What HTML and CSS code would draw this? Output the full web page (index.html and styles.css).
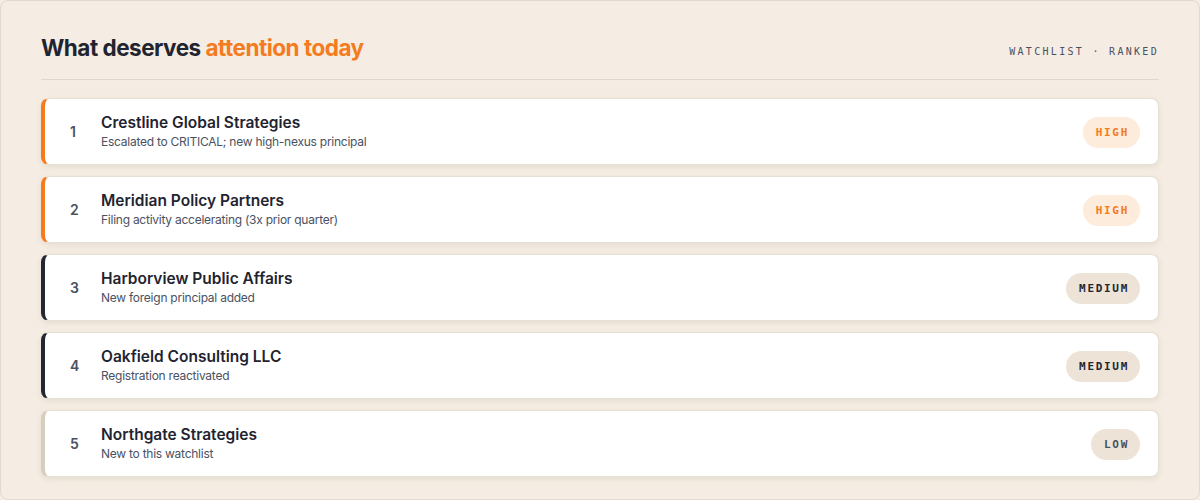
FILE: index.html
```html
<!DOCTYPE html>
<html lang="en">
<head>
<meta charset="utf-8">
<title>Watchlist</title>
<link rel="stylesheet" href="styles.css">
</head>
<body>
<section class="panel">
  <header class="head">
    <h1 class="title">What deserves <span class="accent">attention today</span></h1>
    <div class="meta">WATCHLIST · RANKED</div>
  </header>
  <ol class="list">
    <li class="item sev-high">
      <span class="rank">1</span>
      <div class="info">
        <div class="name">Crestline Global Strategies</div>
        <div class="desc">Escalated to CRITICAL; new high-nexus principal</div>
      </div>
      <span class="badge badge-high">HIGH</span>
    </li>
    <li class="item sev-high">
      <span class="rank">2</span>
      <div class="info">
        <div class="name">Meridian Policy Partners</div>
        <div class="desc">Filing activity accelerating (3x prior quarter)</div>
      </div>
      <span class="badge badge-high">HIGH</span>
    </li>
    <li class="item sev-medium">
      <span class="rank">3</span>
      <div class="info">
        <div class="name">Harborview Public Affairs</div>
        <div class="desc">New foreign principal added</div>
      </div>
      <span class="badge badge-medium">MEDIUM</span>
    </li>
    <li class="item sev-medium">
      <span class="rank">4</span>
      <div class="info">
        <div class="name">Oakfield Consulting LLC</div>
        <div class="desc">Registration reactivated</div>
      </div>
      <span class="badge badge-medium">MEDIUM</span>
    </li>
    <li class="item sev-low">
      <span class="rank">5</span>
      <div class="info">
        <div class="name">Northgate Strategies</div>
        <div class="desc">New to this watchlist</div>
      </div>
      <span class="badge badge-low">LOW</span>
    </li>
  </ol>
</section>
</body>
</html>
```

FILE: styles.css
```css
* { box-sizing: border-box; }
html, body { margin: 0; padding: 0; background: #f5ede3; }
body { font-family: Inter, "Liberation Sans", sans-serif; color: #1f2430; }

.panel {
  width: 1200px;
  height: 500px;
  background: #f5ede3;
  border: 1px solid #e2d9cc;
  border-radius: 8px;
  padding: 32px 40px 22px 40px;
}

.head {
  display: flex;
  align-items: center;
  justify-content: space-between;
  padding-bottom: 16px;
  border-bottom: 1px solid #e0d7ca;
}
.title {
  margin: 0;
  font-size: 22.5px;
  line-height: 30px;
  font-weight: 700;
  letter-spacing: -0.5px;
  color: #1f2430;
}
.accent { color: #f47b20; }
.meta {
  font-family: "DejaVu Sans Mono", "Liberation Mono", monospace;
  font-size: 10px;
  letter-spacing: 2.3px;
  color: #4a5162;
  padding-top: 6px;
}

.list {
  list-style: none;
  margin: 18px 0 0 0;
  padding: 0;
  display: flex;
  flex-direction: column;
  gap: 11px;
}
.item {
  display: flex;
  align-items: center;
  height: 67px;
  background: #ffffff;
  border: 1px solid #e6dfd4;
  border-left: 4px solid #f47b20;
  border-radius: 8px;
  padding: 0 18px 0 24px;
  box-shadow: 0 2px 6px rgba(120, 100, 70, 0.12);
}
.sev-high { border-left-color: #f47b20; }
.sev-medium { border-left-color: #232733; }
.sev-low { border-left-color: #d6cebf; }

.rank {
  width: 32px;
  font-size: 14px;
  font-weight: 600;
  color: #4a5162;
  padding-left: 1px;
}
.info { flex: 1; display: flex; flex-direction: column; gap: 1px; margin-top: -1px; }
.name {
  font-size: 15.5px;
  font-weight: 600;
  letter-spacing: 0;
  color: #1f2430;
  line-height: 19px;
}
.desc {
  font-size: 12px;
  letter-spacing: -0.25px;
  color: #4a5162;
  line-height: 17px;
}

.badge {
  font-family: "DejaVu Sans Mono", "Liberation Mono", monospace;
  font-size: 11px;
  font-weight: 700;
  letter-spacing: 1.7px;
  height: 31px;
  line-height: 31px;
  padding: 0 11px 0 13px;
  border-radius: 16px;
  margin-top: 1px;
}
.badge-high { background: #fdebdc; color: #f47b20; }
.badge-medium { background: #ede4d7; color: #232733; }
.badge-low { background: #ede4d7; color: #4a5162; }
```
